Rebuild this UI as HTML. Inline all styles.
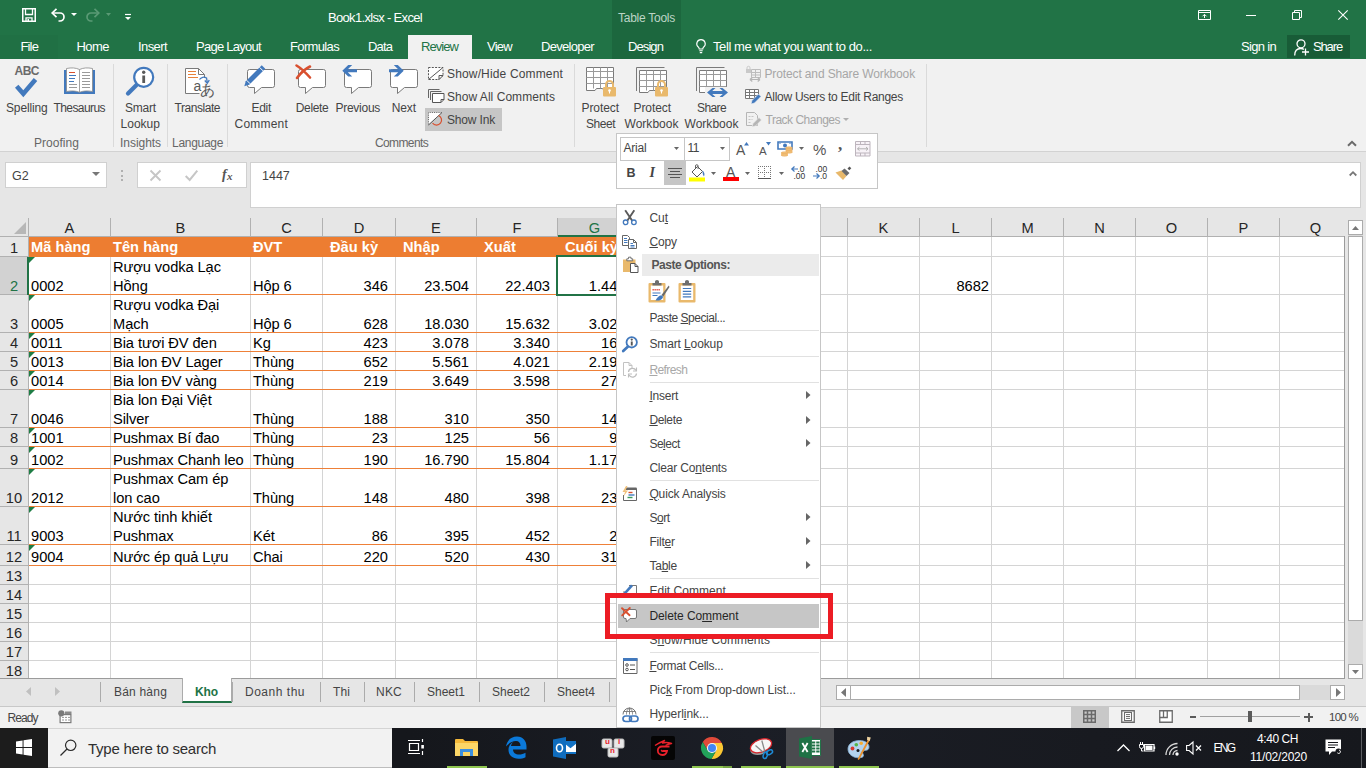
<!DOCTYPE html>
<html lang="en"><head><meta charset="utf-8"><title>Book1.xlsx - Excel</title>
<style>
html,body{margin:0;padding:0;width:1366px;height:768px;overflow:hidden;background:#fff;}
body{position:relative;font-family:"Liberation Sans",sans-serif;font-size:12px;color:#262626;}
.t{position:absolute;white-space:nowrap;line-height:1;display:block;}
.b{position:absolute;box-sizing:border-box;}
svg{position:absolute;overflow:visible;}
u{text-decoration:underline;text-underline-offset:1px;}
</style></head><body>
<div class="b" style="left:0px;top:0px;width:1366px;height:59px;background:#217346;"></div>
<div class="b" style="left:0px;top:35px;width:58px;height:24px;background:#207044;"></div>
<div class="b" style="left:612px;top:0px;width:69px;height:59px;background:#1c673e;"></div>
<span class="t" style="left:328px;top:11px;font-size:13px;color:#fff;letter-spacing:-0.678px;">Book1.xlsx - Excel</span>
<span class="t" style="left:618px;top:11.5px;font-size:12px;color:#bcd5c6;letter-spacing:-0.256px;">Table Tools</span>
<svg style="left:22px;top:8px" width="14" height="14" viewBox="0 0 14 14"><path d="M0.750 0.750h12.500v12.500h-12.500z" fill="none" stroke="#fff" stroke-width="1.500"/><path d="M3.500 1V6.500H10.500V1M4 13V9.800H10V13" fill="none" stroke="#fff" stroke-width="1.300"/><rect x="5.500" y="11" width="1.500" height="2" fill="#fff"/></svg>
<svg style="left:51px;top:8px" width="15" height="14" viewBox="0 0 15 14"><path d="M5.500 0.800L1.200 5l4.300 4.200" fill="none" stroke="#fff" stroke-width="1.700"/><path d="M1.500 5h7.500a4 4 0 0 1 0 8H7.500" fill="none" stroke="#fff" stroke-width="1.700"/></svg>
<svg style="left:71px;top:13px" width="6" height="3" viewBox="0 0 6 3"><path d="M0 0h6L3 3z" fill="#fff"/></svg>
<svg style="left:85px;top:8px" width="15" height="14" viewBox="0 0 15 14"><path d="M9.500 0.800L13.800 5l-4.300 4.200" fill="none" stroke="#5a9a75" stroke-width="1.700"/><path d="M13.500 5H6a4 4 0 0 0 0 8h1.500" fill="none" stroke="#5a9a75" stroke-width="1.700"/></svg>
<svg style="left:106px;top:13px" width="5" height="3" viewBox="0 0 5 3"><path d="M0 0h5L2.500 3z" fill="#5a9a75"/></svg>
<svg style="left:124.5px;top:14px" width="6" height="6" viewBox="0 0 6 6"><path d="M0 0.500h6" stroke="#fff" stroke-width="1.200"/><path d="M0 3h6L3 6z" fill="#fff"/></svg>
<svg style="left:1198px;top:10px" width="13" height="10" viewBox="0 0 13 10"><path d="M0.500 0.500h12v9h-12zM0.500 2.500h12" fill="none" stroke="#fff"/><path d="M6.500 8V4.500M4.500 6.300L6.500 4.300 8.500 6.300" fill="none" stroke="#fff"/></svg>
<div class="b" style="left:1246px;top:15px;width:10px;height:1px;background:#fff;"></div>
<svg style="left:1292px;top:10px" width="10" height="10" viewBox="0 0 10 10"><path d="M0.500 2.500h7v7h-7z" fill="none" stroke="#fff"/><path d="M2.500 2.500v-2h7v7h-2" fill="none" stroke="#fff"/></svg>
<svg style="left:1338px;top:10px" width="10" height="10" viewBox="0 0 10 10"><path d="M0.300 0.300l9.400 9.400M9.700 0.300L0.300 9.700" stroke="#fff" stroke-width="1.100"/></svg>
<span class="t" style="left:20.5px;top:40px;font-size:13px;color:#fff;letter-spacing:-0.862px;">File</span>
<span class="t" style="left:76.5px;top:40px;font-size:13px;color:#fff;letter-spacing:-0.544px;">Home</span>
<span class="t" style="left:138px;top:40px;font-size:13px;color:#fff;letter-spacing:-0.585px;">Insert</span>
<span class="t" style="left:196px;top:40px;font-size:13px;color:#fff;letter-spacing:-0.727px;">Page Layout</span>
<span class="t" style="left:290px;top:40px;font-size:13px;color:#fff;letter-spacing:-0.647px;">Formulas</span>
<span class="t" style="left:368px;top:40px;font-size:13px;color:#fff;letter-spacing:-0.865px;">Data</span>
<span class="t" style="left:487px;top:40px;font-size:13px;color:#fff;letter-spacing:-0.735px;">View</span>
<span class="t" style="left:541px;top:40px;font-size:13px;color:#fff;letter-spacing:-0.695px;">Developer</span>
<span class="t" style="left:628px;top:40px;font-size:13px;color:#fff;letter-spacing:-0.911px;">Design</span>
<div class="b" style="left:408px;top:35px;width:64px;height:25px;background:#f1f1f1;"></div>
<span class="t" style="left:421px;top:40px;font-size:13px;color:#217346;letter-spacing:-0.937px;">Review</span>
<svg style="left:696px;top:39px" width="10" height="15" viewBox="0 0 10 15"><path d="M5 0.600a4.200 4.200 0 0 1 2.500 7.600c-.5.400-.7 1-.7 1.800H3.200c0-.8-.2-1.400-.7-1.800A4.200 4.200 0 0 1 5 .6z" fill="none" stroke="#fff" stroke-width="1.100"/><path d="M3.300 11.800h3.400M3.800 13.600h2.400" stroke="#fff" stroke-width="1.100"/></svg>
<span class="t" style="left:713px;top:40px;font-size:13px;color:#fff;letter-spacing:-0.408px;">Tell me what you want to do...</span>
<span class="t" style="left:1241px;top:40px;font-size:13px;color:#fff;letter-spacing:-0.678px;">Sign in</span>
<div class="b" style="left:1287px;top:35px;width:63px;height:23px;background:#185c37;"></div>
<svg style="left:1294px;top:39px" width="16" height="17" viewBox="0 0 16 17"><circle cx="7" cy="4.800" r="4" fill="none" stroke="#fff" stroke-width="1.300"/><path d="M0.700 16.500c0-4.500 2.500-7 6-7 1.300 0 2.300.3 3.200.9" fill="none" stroke="#fff" stroke-width="1.300"/><path d="M11.500 9.500v7M8 13h7" stroke="#fff" stroke-width="1.300"/></svg>
<span class="t" style="left:1313px;top:40px;font-size:13px;color:#fff;letter-spacing:-1.138px;">Share</span>
<div class="b" style="left:0px;top:59px;width:1366px;height:92px;background:#f1f1f1;"></div>
<div class="b" style="left:0px;top:151px;width:1366px;height:1px;background:#d2d2d2;"></div>
<div class="b" style="left:0px;top:152px;width:1366px;height:66px;background:#e6e6e6;"></div>
<div class="b" style="left:113px;top:64px;width:1px;height:83px;background:#dadada;"></div>
<div class="b" style="left:167px;top:64px;width:1px;height:83px;background:#dadada;"></div>
<div class="b" style="left:227px;top:64px;width:1px;height:83px;background:#dadada;"></div>
<div class="b" style="left:574px;top:64px;width:1px;height:83px;background:#dadada;"></div>
<div class="b" style="left:926px;top:64px;width:1px;height:83px;background:#dadada;"></div>
<span class="t" style="left:14.5px;top:64.5px;font-size:12px;color:#6a6a6a;letter-spacing:-0.500px;font-weight:bold;">ABC</span>
<svg style="left:14px;top:77px" width="24" height="20" viewBox="0 0 24 20"><path d="M2.700 9.300L9.300 16.800 21.500 2.500" fill="none" stroke="#4279bd" stroke-width="4.600"/></svg>
<svg style="left:64px;top:67px" width="31" height="27" viewBox="0 0 31 27"><path d="M0 3h31v24H0z" fill="#4279bd"/><path d="M2.500 1.500c5-1 9-.8 13 1 4-1.800 8-2 13-1v23c-5-1-9-.8-13 .8-4-1.600-8-1.800-13-.8z" fill="#fff" stroke="#8a8a8a" stroke-width=".8"/><path d="M15.500 2.500v22.500" stroke="#8a8a8a" stroke-width=".8"/><path d="M5 5.500h6" stroke="#d9502f"/><path d="M5 8.500h7M5 11.500h6M5 14.500h5" stroke="#4279bd"/><path d="M5 17.500h8M5 20.500h8M18 5.500h8M18 8.500h8M18 11.500h8M18 14.500h8M18 17.500h8M18 20.500h8" stroke="#9a9a9a"/></svg>
<svg style="left:125px;top:66px" width="30" height="30" viewBox="0 0 30 30"><path d="M12 18.500L3 27.500" stroke="#4279bd" stroke-width="4.200" stroke-linecap="round"/><circle cx="18.700" cy="11.300" r="9.500" fill="#fff" stroke="#4279bd" stroke-width="2.200"/><rect x="17.300" y="9.500" width="2.800" height="7.500" fill="#5a5a5a"/><circle cx="18.700" cy="6.300" r="1.700" fill="#5a5a5a"/></svg>
<svg style="left:185px;top:68px" width="30" height="30" viewBox="0 0 30 30"><path d="M0.500 0.500h13l6 6v19h-19z" fill="#fff"/><path d="M19.500 10V6.500l-6-6h-13v25h14" fill="none" stroke="#7a7a7a"/><path d="M13.500 0.500v6h6" fill="none" stroke="#7a7a7a"/><path d="M3 3.500h8M3 6.500h8M3 9.500h10" stroke="#e8813a" stroke-width="1.100"/><rect x="7" y="13" width="21" height="16" fill="#f1f1f1" opacity="0"/><path d="M14.500 11.500a5 5 0 0 1 7-1.500l.7 4" fill="none" stroke="#4279bd" stroke-width="1.300"/><path d="M19.800 12.500l2.500 2.600 2-3" fill="none" stroke="#4279bd" stroke-width="1.300"/></svg>
<span class="t" style="left:193.5px;top:78.5px;font-size:14px;color:#5a5a5a;">a</span>
<span class="t" style="left:200px;top:83px;font-size:14.5px;color:#5a5a5a;font-family:"Liberation Sans","Noto Sans CJK JP",sans-serif;">あ</span>
<svg style="left:247px;top:69px" width="29" height="26" viewBox="0 0 29 26"><path d="M2.500 0.500h23a2 2 0 0 1 2 2v14a2 2 0 0 1-2 2H14.500L7.500 24.500V18.500H2.500a2 2 0 0 1-2-2v-14a2 2 0 0 1 2-2z" fill="#fff" stroke="#7a7a7a"/></svg>
<svg style="left:244px;top:65px" width="23" height="22" viewBox="0 0 23 22"><path d="M0.300 21.200L1.730 16.230L17.730 0.230L21.270 3.770L5.270 19.770Z" fill="#4279bd"/><path d="M15.600 2.400l3.500 3.500M2.700 15.300l3.500 3.500" stroke="#fff" stroke-width="1"/></svg>
<svg style="left:298px;top:69px" width="29" height="26" viewBox="0 0 29 26"><path d="M2.500 0.500h23a2 2 0 0 1 2 2v14a2 2 0 0 1-2 2H14.500L7.500 24.500V18.500H2.500a2 2 0 0 1-2-2v-14a2 2 0 0 1 2-2z" fill="#fff" stroke="#7a7a7a"/></svg>
<svg style="left:295px;top:64px" width="17" height="16" viewBox="0 0 17 16"><path d="M1.500 1.500c5 3 9 7 13.500 12M15 2.500C10 5 5.500 9 2 14" fill="none" stroke="#d9502f" stroke-width="2.600" stroke-linecap="round"/></svg>
<svg style="left:344px;top:69px" width="29" height="26" viewBox="0 0 29 26"><path d="M2.500 0.500h23a2 2 0 0 1 2 2v14a2 2 0 0 1-2 2H14.500L7.500 24.500V18.500H2.500a2 2 0 0 1-2-2v-14a2 2 0 0 1 2-2z" fill="#fff" stroke="#7a7a7a"/></svg>
<svg style="left:342px;top:65px" width="16" height="12" viewBox="0 0 16 12"><path d="M0.300 5.700L6.200 0h4L5.800 4.200H15v3H5.800l4.400 4.200h-4z" fill="#4279bd"/></svg>
<svg style="left:390px;top:69px" width="29" height="26" viewBox="0 0 29 26"><path d="M2.500 0.500h23a2 2 0 0 1 2 2v14a2 2 0 0 1-2 2H14.500L7.500 24.500V18.500H2.500a2 2 0 0 1-2-2v-14a2 2 0 0 1 2-2z" fill="#fff" stroke="#7a7a7a"/></svg>
<svg style="left:388px;top:65px" width="16" height="12" viewBox="0 0 16 12"><path d="M15.700 5.700L9.800 0h-4l4.400 4.200H1v3h9.200L5.800 11.400h4z" fill="#4279bd"/></svg>
<svg style="left:428px;top:67px" width="16" height="13" viewBox="0 0 16 13"><path d="M0.500 0.500h14.500v8l-4 4H0.500z" fill="#fff" stroke="#555" stroke-dasharray="2 1.300"/><path d="M15 8.500h-4v4z" fill="#fff" stroke="#555"/><path d="M0.500 12.500L15 0.500" stroke="#555"/></svg>
<svg style="left:428px;top:89px" width="17" height="15" viewBox="0 0 17 15"><path d="M0.500 9V0.500h11M2.500 11V2.500h11" fill="none" stroke="#666"/><path d="M4.500 4.500h11.500v6l-3 3h-8.500z" fill="#fff" stroke="#555"/><path d="M16 10.500h-3v3" fill="none" stroke="#555"/></svg>
<div class="b" style="left:425px;top:108px;width:77px;height:23px;background:#c6c6c6;"></div>
<svg style="left:428px;top:112px" width="17" height="14" viewBox="0 0 17 14"><path d="M0.500 12.500L14 0.500H0.500z" fill="#fff"/><path d="M0.500 12.500V0.500H14" fill="none" stroke="#666" stroke-dasharray="1 1.200"/><path d="M0.500 13L14 0.500" stroke="#555"/><path d="M10.500 3.500a5 5 0 1 1-6 7.500" fill="none" stroke="#d9502f" stroke-width="1.200"/></svg>
<svg style="left:586px;top:67px" width="31" height="31" viewBox="0 0 31 31"><path d="M0.500 0.500h27v23h-9.500l-1.500-2h-6l-1.500 2H0.500z" fill="#fff" stroke="#7a7a7a"/><path d="M0.500 4.500h27M0.500 10.500h27M0.500 16.500h27M7.500 0.500v21M14.500 0.500v21M21.500 0.500v21" fill="none" stroke="#9a9a9a"/><rect x="17" y="20" width="13" height="9.500" rx="1" fill="#e9b96c"/><path d="M20 20v-2.500a3.500 3.500 0 0 1 7 0v2.500" fill="none" stroke="#e9b96c" stroke-width="2"/><circle cx="23.5" cy="23.5" r="1.300" fill="#fff"/><rect x="23" y="23.5" width="1" height="3" fill="#fff"/></svg>
<svg style="left:636px;top:67px" width="33" height="31" viewBox="0 0 33 31"><path d="M0.500 24V0.500h28" fill="none" stroke="#7a7a7a"/><g transform="translate(3,3)"><path d="M0.500 0.500h27v22h-9.500l-1.500-2h-6l-1.500 2H0.500z" fill="#fff" stroke="#7a7a7a"/><path d="M0.500 4.500h27M0.500 10.500h27M0.500 16.500h27M7.500 0.500v20M14.500 0.500v20M21.500 0.500v20" fill="none" stroke="#9a9a9a"/></g><rect x="19" y="20" width="13" height="9.500" rx="1" fill="#e9b96c"/><path d="M22 20v-2.500a3.500 3.500 0 0 1 7 0v2.500" fill="none" stroke="#e9b96c" stroke-width="2"/><circle cx="25.5" cy="23.5" r="1.300" fill="#fff"/><rect x="25" y="23.5" width="1" height="3" fill="#fff"/></svg>
<svg style="left:696px;top:67px" width="33" height="31" viewBox="0 0 33 31"><path d="M0.500 24V0.500h28" fill="none" stroke="#7a7a7a"/><g transform="translate(3,3)"><path d="M0.500 0.500h27v22h-27z" fill="#fff" stroke="#7a7a7a"/><path d="M0.500 4.500h27M0.500 10.500h27M0.500 16.500h27M7.500 0.500v22M14.500 0.500v22M21.500 0.500v22" fill="none" stroke="#9a9a9a"/></g><path d="M9 20h24v11H9z" fill="#f1f1f1"/><path d="M11 25.500l5.500-4.500h3l-3.300 3h10.600l-3.300-3h3l5.500 4.500-5.500 4.500h-3l3.300-3H16.200l3.300 3h-3z" fill="#4279bd"/></svg>
<svg style="left:745px;top:66px" width="17" height="16" viewBox="0 0 17 16"><rect x="1" y="3" width="5" height="4" fill="#c9c9c9"/><path d="M2 3V1.800a1.500 1.500 0 0 1 3 0V3" fill="none" stroke="#c9c9c9"/><path d="M6.500 3.500h9v8h-9zM6.500 6.500h9M6.500 9h9M10.500 3.500v8" fill="none" stroke="#bdbdbd"/><path d="M5 13.500h10M5 13.500l2.300-2M5 13.500l2.300 2M15 13.500l-2.300-2M15 13.500l-2.300 2" fill="none" stroke="#b5b5b5" stroke-width="1.200"/></svg>
<svg style="left:745px;top:89px" width="17" height="16" viewBox="0 0 17 16"><path d="M0.500 0.500h13v9h-13zM0.500 3.500h13M0.500 6.500h13M4.500 0.500v9M9.500 0.500v9" fill="#fff" stroke="#777"/><path d="M6 15l1-3.500 6.500-6.500 2.500 2.500-6.500 6.500z" fill="#4279bd" stroke="#f1f1f1" stroke-width=".6"/></svg>
<svg style="left:746px;top:112px" width="16" height="16" viewBox="0 0 16 16"><path d="M0.500 0.500h8l3 3v10h-11z" fill="none" stroke="#b5b5b5"/><path d="M2.500 4.500h5M2.500 7.500h4M2.500 10.500h3" stroke="#c5c5c5" stroke-dasharray="2 1"/><path d="M6 15l1-3.500 6-6 2.500 2.500-6 6z" fill="#b5b5b5" stroke="#f1f1f1" stroke-width=".6"/></svg>
<span class="t" style="left:6px;top:102px;font-size:12px;color:#444;letter-spacing:-0.149px;">Spelling</span>
<span class="t" style="left:53.5px;top:102px;font-size:12px;color:#444;letter-spacing:-0.577px;">Thesaurus</span>
<span class="t" style="left:125px;top:102px;font-size:12px;color:#444;letter-spacing:-0.200px;">Smart</span>
<span class="t" style="left:120.5px;top:118px;font-size:12px;color:#444;letter-spacing:0.022px;">Lookup</span>
<span class="t" style="left:174.5px;top:102px;font-size:12px;color:#444;letter-spacing:-0.453px;">Translate</span>
<span class="t" style="left:251.5px;top:102px;font-size:12px;color:#444;letter-spacing:-0.294px;">Edit</span>
<span class="t" style="left:234.5px;top:118px;font-size:12px;color:#444;letter-spacing:0.213px;">Comment</span>
<span class="t" style="left:295.8px;top:102px;font-size:12px;color:#444;letter-spacing:-0.364px;">Delete</span>
<span class="t" style="left:335.5px;top:102px;font-size:12px;color:#444;letter-spacing:-0.273px;">Previous</span>
<span class="t" style="left:391.8px;top:102px;font-size:12px;color:#444;letter-spacing:-0.168px;">Next</span>
<span class="t" style="left:447px;top:68px;font-size:12px;color:#444;letter-spacing:0.154px;">Show/Hide Comment</span>
<span class="t" style="left:447px;top:91px;font-size:12px;color:#444;letter-spacing:0.037px;">Show All Comments</span>
<span class="t" style="left:447px;top:114px;font-size:12px;color:#444;letter-spacing:-0.170px;">Show Ink</span>
<span class="t" style="left:581.5px;top:102px;font-size:12px;color:#444;letter-spacing:-0.073px;">Protect</span>
<span class="t" style="left:586px;top:118px;font-size:12px;color:#444;letter-spacing:-0.472px;">Sheet</span>
<span class="t" style="left:633.5px;top:102px;font-size:12px;color:#444;letter-spacing:-0.073px;">Protect</span>
<span class="t" style="left:624.5px;top:118px;font-size:12px;color:#444;letter-spacing:0.025px;">Workbook</span>
<span class="t" style="left:697px;top:102px;font-size:12px;color:#444;letter-spacing:-0.604px;">Share</span>
<span class="t" style="left:684.5px;top:118px;font-size:12px;color:#444;letter-spacing:0.025px;">Workbook</span>
<span class="t" style="left:764.5px;top:68px;font-size:12px;color:#a6a6a6;letter-spacing:-0.129px;">Protect and Share Workbook</span>
<span class="t" style="left:764.5px;top:91px;font-size:12px;color:#444;letter-spacing:-0.265px;">Allow Users to Edit Ranges</span>
<span class="t" style="left:765.5px;top:114px;font-size:12px;color:#a6a6a6;letter-spacing:-0.494px;">Track Changes</span>
<svg style="left:843px;top:118px" width="6" height="3" viewBox="0 0 6 3"><path d="M0 0h6L3 3z" fill="#b0b0b0"/></svg>
<span class="t" style="left:34px;top:137px;font-size:12px;color:#666;letter-spacing:0.038px;">Proofing</span>
<span class="t" style="left:120px;top:137px;font-size:12px;color:#666;letter-spacing:-0.044px;">Insights</span>
<span class="t" style="left:172px;top:137px;font-size:12px;color:#666;letter-spacing:-0.298px;">Language</span>
<span class="t" style="left:375px;top:137px;font-size:12px;color:#666;letter-spacing:-0.626px;">Comments</span>
<svg style="left:1346.5px;top:139.5px" width="10" height="7" viewBox="0 0 10 7"><path d="M1 5.800L5 1.800l4 4" fill="none" stroke="#6a6a6a" stroke-width="2"/></svg>
<div class="b" style="left:5px;top:162px;width:102px;height:26px;background:#fff;border:1px solid #d0d0d0;"></div>
<span class="t" style="left:12px;top:170px;font-size:12.5px;color:#444;">G2</span>
<svg style="left:92px;top:172px" width="8" height="4" viewBox="0 0 8 4"><path d="M0 0h8L4 4z" fill="#777"/></svg>
<div class="b" style="left:121px;top:170px;width:2px;height:2px;background:#b0b0b0;"></div>
<div class="b" style="left:121px;top:174.5px;width:2px;height:2px;background:#b0b0b0;"></div>
<div class="b" style="left:121px;top:179px;width:2px;height:2px;background:#b0b0b0;"></div>
<div class="b" style="left:137px;top:162px;width:110px;height:26px;background:#fff;border:1px solid #d0d0d0;"></div>
<svg style="left:150px;top:170px" width="11" height="11" viewBox="0 0 11 11"><path d="M0.500 0.500l10 10M10.500 0.500l-10 10" stroke="#c6c6c6" stroke-width="1.900"/></svg>
<svg style="left:185px;top:170px" width="13" height="11" viewBox="0 0 13 11"><path d="M0.700 6l4 4L12.300 0.700" fill="none" stroke="#c6c6c6" stroke-width="2"/></svg>
<span class="t" style="left:222px;top:167px;font-size:14px;color:#555;"><i style="font-family:'Liberation Serif',serif;font-weight:bold;">f</i></span>
<span class="t" style="left:227px;top:171px;font-size:11px;color:#555;"><i style="font-family:'Liberation Serif',serif;font-weight:bold;">x</i></span>
<div class="b" style="left:250px;top:162px;width:1111px;height:46px;background:#fff;border:1px solid #d0d0d0;"></div>
<span class="t" style="left:262px;top:170px;font-size:12.5px;color:#444;">1447</span>
<svg style="left:1348.5px;top:171px" width="8" height="5" viewBox="0 0 8 5"><path d="M0.700 4.500L4 1.200l3.300 3.300" fill="none" stroke="#777" stroke-width="1.800"/></svg>
<div class="b" style="left:0;top:218px;width:1345px;height:461px;overflow:hidden;background:#fff;">
<div class="b" style="left:0px;top:0px;width:1345px;height:19px;background:#e6e6e6;"></div>
<div class="b" style="left:0px;top:19px;width:29px;height:442px;background:#e6e6e6;"></div>
<div class="b" style="left:558px;top:0px;width:73px;height:19px;background:#d2d2d2;"></div>
<div class="b" style="left:0px;top:39px;width:29px;height:37px;background:#d2d2d2;"></div>
<div class="b" style="left:110px;top:19px;width:1px;height:442px;background:#d4d4d4;"></div>
<div class="b" style="left:110px;top:0px;width:1px;height:18px;background:#b1b1b1;"></div>
<span class="t" style="left:63.5px;top:3px;font-size:14.67px;color:#262626;width:12px;text-align:center;">A</span>
<div class="b" style="left:250px;top:19px;width:1px;height:442px;background:#d4d4d4;"></div>
<div class="b" style="left:250px;top:0px;width:1px;height:18px;background:#b1b1b1;"></div>
<span class="t" style="left:174.5px;top:3px;font-size:14.67px;color:#262626;width:12px;text-align:center;">B</span>
<div class="b" style="left:322px;top:19px;width:1px;height:442px;background:#d4d4d4;"></div>
<div class="b" style="left:322px;top:0px;width:1px;height:18px;background:#b1b1b1;"></div>
<span class="t" style="left:280.5px;top:3px;font-size:14.67px;color:#262626;width:12px;text-align:center;">C</span>
<div class="b" style="left:395px;top:19px;width:1px;height:442px;background:#d4d4d4;"></div>
<div class="b" style="left:395px;top:0px;width:1px;height:18px;background:#b1b1b1;"></div>
<span class="t" style="left:353px;top:3px;font-size:14.67px;color:#262626;width:12px;text-align:center;">D</span>
<div class="b" style="left:476px;top:19px;width:1px;height:442px;background:#d4d4d4;"></div>
<div class="b" style="left:476px;top:0px;width:1px;height:18px;background:#b1b1b1;"></div>
<span class="t" style="left:430px;top:3px;font-size:14.67px;color:#262626;width:12px;text-align:center;">E</span>
<div class="b" style="left:557px;top:19px;width:1px;height:442px;background:#d4d4d4;"></div>
<div class="b" style="left:557px;top:0px;width:1px;height:18px;background:#b1b1b1;"></div>
<span class="t" style="left:511px;top:3px;font-size:14.67px;color:#262626;width:12px;text-align:center;">F</span>
<div class="b" style="left:631px;top:19px;width:1px;height:442px;background:#d4d4d4;"></div>
<div class="b" style="left:631px;top:0px;width:1px;height:18px;background:#b1b1b1;"></div>
<span class="t" style="left:588.5px;top:3px;font-size:14.67px;color:#217346;width:12px;text-align:center;">G</span>
<div class="b" style="left:703px;top:19px;width:1px;height:442px;background:#d4d4d4;"></div>
<div class="b" style="left:703px;top:0px;width:1px;height:18px;background:#b1b1b1;"></div>
<span class="t" style="left:661.5px;top:3px;font-size:14.67px;color:#262626;width:12px;text-align:center;">H</span>
<div class="b" style="left:775px;top:19px;width:1px;height:442px;background:#d4d4d4;"></div>
<div class="b" style="left:775px;top:0px;width:1px;height:18px;background:#b1b1b1;"></div>
<span class="t" style="left:733.5px;top:3px;font-size:14.67px;color:#262626;width:12px;text-align:center;">I</span>
<div class="b" style="left:847px;top:19px;width:1px;height:442px;background:#d4d4d4;"></div>
<div class="b" style="left:847px;top:0px;width:1px;height:18px;background:#b1b1b1;"></div>
<span class="t" style="left:805.5px;top:3px;font-size:14.67px;color:#262626;width:12px;text-align:center;">J</span>
<div class="b" style="left:919px;top:19px;width:1px;height:442px;background:#d4d4d4;"></div>
<div class="b" style="left:919px;top:0px;width:1px;height:18px;background:#b1b1b1;"></div>
<span class="t" style="left:877.5px;top:3px;font-size:14.67px;color:#262626;width:12px;text-align:center;">K</span>
<div class="b" style="left:991px;top:19px;width:1px;height:442px;background:#d4d4d4;"></div>
<div class="b" style="left:991px;top:0px;width:1px;height:18px;background:#b1b1b1;"></div>
<span class="t" style="left:949.5px;top:3px;font-size:14.67px;color:#262626;width:12px;text-align:center;">L</span>
<div class="b" style="left:1063px;top:19px;width:1px;height:442px;background:#d4d4d4;"></div>
<div class="b" style="left:1063px;top:0px;width:1px;height:18px;background:#b1b1b1;"></div>
<span class="t" style="left:1021.5px;top:3px;font-size:14.67px;color:#262626;width:12px;text-align:center;">M</span>
<div class="b" style="left:1135px;top:19px;width:1px;height:442px;background:#d4d4d4;"></div>
<div class="b" style="left:1135px;top:0px;width:1px;height:18px;background:#b1b1b1;"></div>
<span class="t" style="left:1093.5px;top:3px;font-size:14.67px;color:#262626;width:12px;text-align:center;">N</span>
<div class="b" style="left:1207px;top:19px;width:1px;height:442px;background:#d4d4d4;"></div>
<div class="b" style="left:1207px;top:0px;width:1px;height:18px;background:#b1b1b1;"></div>
<span class="t" style="left:1165.5px;top:3px;font-size:14.67px;color:#262626;width:12px;text-align:center;">O</span>
<div class="b" style="left:1279px;top:19px;width:1px;height:442px;background:#d4d4d4;"></div>
<div class="b" style="left:1279px;top:0px;width:1px;height:18px;background:#b1b1b1;"></div>
<span class="t" style="left:1237.5px;top:3px;font-size:14.67px;color:#262626;width:12px;text-align:center;">P</span>
<div class="b" style="left:1351px;top:19px;width:1px;height:442px;background:#d4d4d4;"></div>
<div class="b" style="left:1351px;top:0px;width:1px;height:18px;background:#b1b1b1;"></div>
<span class="t" style="left:1309.5px;top:3px;font-size:14.67px;color:#262626;width:12px;text-align:center;">Q</span>
<div class="b" style="left:28px;top:0px;width:1px;height:461px;background:#b1b1b1;"></div>
<div class="b" style="left:0px;top:18px;width:1345px;height:1px;background:#b1b1b1;"></div>
<div class="b" style="left:0px;top:38px;width:28px;height:1px;background:#b1b1b1;"></div>
<div class="b" style="left:29px;top:38px;width:1316px;height:1px;background:#d4d4d4;"></div>
<span class="t" style="left:0px;top:22.5px;font-size:14.67px;color:#262626;width:28px;text-align:center;">1</span>
<div class="b" style="left:0px;top:76px;width:28px;height:1px;background:#b1b1b1;"></div>
<div class="b" style="left:29px;top:76px;width:1316px;height:1px;background:#d4d4d4;"></div>
<span class="t" style="left:0px;top:60.5px;font-size:14.67px;color:#217346;width:28px;text-align:center;">2</span>
<div class="b" style="left:0px;top:114px;width:28px;height:1px;background:#b1b1b1;"></div>
<div class="b" style="left:29px;top:114px;width:1316px;height:1px;background:#d4d4d4;"></div>
<span class="t" style="left:0px;top:98.5px;font-size:14.67px;color:#262626;width:28px;text-align:center;">3</span>
<div class="b" style="left:0px;top:133px;width:28px;height:1px;background:#b1b1b1;"></div>
<div class="b" style="left:29px;top:133px;width:1316px;height:1px;background:#d4d4d4;"></div>
<span class="t" style="left:0px;top:117.5px;font-size:14.67px;color:#262626;width:28px;text-align:center;">4</span>
<div class="b" style="left:0px;top:152px;width:28px;height:1px;background:#b1b1b1;"></div>
<div class="b" style="left:29px;top:152px;width:1316px;height:1px;background:#d4d4d4;"></div>
<span class="t" style="left:0px;top:136.5px;font-size:14.67px;color:#262626;width:28px;text-align:center;">5</span>
<div class="b" style="left:0px;top:171px;width:28px;height:1px;background:#b1b1b1;"></div>
<div class="b" style="left:29px;top:171px;width:1316px;height:1px;background:#d4d4d4;"></div>
<span class="t" style="left:0px;top:155.5px;font-size:14.67px;color:#262626;width:28px;text-align:center;">6</span>
<div class="b" style="left:0px;top:209px;width:28px;height:1px;background:#b1b1b1;"></div>
<div class="b" style="left:29px;top:209px;width:1316px;height:1px;background:#d4d4d4;"></div>
<span class="t" style="left:0px;top:193.5px;font-size:14.67px;color:#262626;width:28px;text-align:center;">7</span>
<div class="b" style="left:0px;top:228px;width:28px;height:1px;background:#b1b1b1;"></div>
<div class="b" style="left:29px;top:228px;width:1316px;height:1px;background:#d4d4d4;"></div>
<span class="t" style="left:0px;top:212.5px;font-size:14.67px;color:#262626;width:28px;text-align:center;">8</span>
<div class="b" style="left:0px;top:250px;width:28px;height:1px;background:#b1b1b1;"></div>
<div class="b" style="left:29px;top:250px;width:1316px;height:1px;background:#d4d4d4;"></div>
<span class="t" style="left:0px;top:234.5px;font-size:14.67px;color:#262626;width:28px;text-align:center;">9</span>
<div class="b" style="left:0px;top:288px;width:28px;height:1px;background:#b1b1b1;"></div>
<div class="b" style="left:29px;top:288px;width:1316px;height:1px;background:#d4d4d4;"></div>
<span class="t" style="left:0px;top:272.5px;font-size:14.67px;color:#262626;width:28px;text-align:center;">10</span>
<div class="b" style="left:0px;top:326px;width:28px;height:1px;background:#b1b1b1;"></div>
<div class="b" style="left:29px;top:326px;width:1316px;height:1px;background:#d4d4d4;"></div>
<span class="t" style="left:0px;top:310.5px;font-size:14.67px;color:#262626;width:28px;text-align:center;">11</span>
<div class="b" style="left:0px;top:347px;width:28px;height:1px;background:#b1b1b1;"></div>
<div class="b" style="left:29px;top:347px;width:1316px;height:1px;background:#d4d4d4;"></div>
<span class="t" style="left:0px;top:331.5px;font-size:14.67px;color:#262626;width:28px;text-align:center;">12</span>
<div class="b" style="left:0px;top:366px;width:28px;height:1px;background:#b1b1b1;"></div>
<div class="b" style="left:29px;top:366px;width:1316px;height:1px;background:#d4d4d4;"></div>
<span class="t" style="left:0px;top:350.5px;font-size:14.67px;color:#262626;width:28px;text-align:center;">13</span>
<div class="b" style="left:0px;top:385px;width:28px;height:1px;background:#b1b1b1;"></div>
<div class="b" style="left:29px;top:385px;width:1316px;height:1px;background:#d4d4d4;"></div>
<span class="t" style="left:0px;top:369.5px;font-size:14.67px;color:#262626;width:28px;text-align:center;">14</span>
<div class="b" style="left:0px;top:404px;width:28px;height:1px;background:#b1b1b1;"></div>
<div class="b" style="left:29px;top:404px;width:1316px;height:1px;background:#d4d4d4;"></div>
<span class="t" style="left:0px;top:388.5px;font-size:14.67px;color:#262626;width:28px;text-align:center;">15</span>
<div class="b" style="left:0px;top:423px;width:28px;height:1px;background:#b1b1b1;"></div>
<div class="b" style="left:29px;top:423px;width:1316px;height:1px;background:#d4d4d4;"></div>
<span class="t" style="left:0px;top:407.5px;font-size:14.67px;color:#262626;width:28px;text-align:center;">16</span>
<div class="b" style="left:0px;top:442px;width:28px;height:1px;background:#b1b1b1;"></div>
<div class="b" style="left:29px;top:442px;width:1316px;height:1px;background:#d4d4d4;"></div>
<span class="t" style="left:0px;top:426.5px;font-size:14.67px;color:#262626;width:28px;text-align:center;">17</span>
<div class="b" style="left:0px;top:461px;width:28px;height:1px;background:#b1b1b1;"></div>
<div class="b" style="left:29px;top:461px;width:1316px;height:1px;background:#d4d4d4;"></div>
<span class="t" style="left:0px;top:445.5px;font-size:14.67px;color:#262626;width:28px;text-align:center;">18</span>
<svg style="left:14px;top:4px" width="12" height="12"><path d="M12 0V12H0Z" fill="#b7b7b7"/></svg>
<div class="b" style="left:29px;top:19px;width:602px;height:20px;background:#ed7d31;"></div>
<span class="t" style="left:31px;top:22px;font-size:14.67px;color:#fff;font-weight:bold;">Mã hàng</span>
<span class="t" style="left:113px;top:22px;font-size:14.67px;color:#fff;font-weight:bold;">Tên hàng</span>
<span class="t" style="left:253px;top:22px;font-size:14.67px;color:#fff;font-weight:bold;">ĐVT</span>
<span class="t" style="left:330px;top:22px;font-size:14.67px;color:#fff;font-weight:bold;">Đầu kỳ</span>
<span class="t" style="left:403px;top:22px;font-size:14.67px;color:#fff;font-weight:bold;">Nhập</span>
<span class="t" style="left:484px;top:22px;font-size:14.67px;color:#fff;font-weight:bold;">Xuất</span>
<span class="t" style="left:565px;top:22px;font-size:14.67px;color:#fff;font-weight:bold;">Cuối kỳ</span>
<div class="b" style="left:29px;top:76px;width:602px;height:1px;background:#ee8038;"></div>
<span class="t" style="left:31px;top:60.5px;font-size:14.67px;color:#000;">0002</span>
<span class="t" style="left:113px;top:60.5px;font-size:14.67px;color:#000;letter-spacing:-0.08px;">Hồng</span>
<span class="t" style="left:113px;top:41.5px;font-size:14.67px;color:#000;letter-spacing:-0.08px;">Rượu vodka Lạc</span>
<span class="t" style="left:253px;top:60.5px;font-size:14.67px;color:#000;letter-spacing:-0.1px;">Hộp 6</span>
<span class="t" style="left:288px;top:60.5px;font-size:14.67px;color:#000;width:100px;text-align:right;">346</span>
<span class="t" style="left:369px;top:60.5px;font-size:14.67px;color:#000;width:100px;text-align:right;">23.504</span>
<span class="t" style="left:450px;top:60.5px;font-size:14.67px;color:#000;width:100px;text-align:right;">22.403</span>
<span class="t" style="left:525.5px;top:60.5px;font-size:14.67px;color:#000;width:100px;text-align:right;">1.447</span>
<svg style="left:29px;top:39px" width="6" height="6"><path d="M0 0H6L0 6Z" fill="#1e7d45"/></svg>
<div class="b" style="left:29px;top:114px;width:602px;height:1px;background:#ee8038;"></div>
<span class="t" style="left:31px;top:98.5px;font-size:14.67px;color:#000;">0005</span>
<span class="t" style="left:113px;top:98.5px;font-size:14.67px;color:#000;letter-spacing:-0.08px;">Mạch</span>
<span class="t" style="left:113px;top:79.5px;font-size:14.67px;color:#000;letter-spacing:-0.08px;">Rượu vodka Đại</span>
<span class="t" style="left:253px;top:98.5px;font-size:14.67px;color:#000;letter-spacing:-0.1px;">Hộp 6</span>
<span class="t" style="left:288px;top:98.5px;font-size:14.67px;color:#000;width:100px;text-align:right;">628</span>
<span class="t" style="left:369px;top:98.5px;font-size:14.67px;color:#000;width:100px;text-align:right;">18.030</span>
<span class="t" style="left:450px;top:98.5px;font-size:14.67px;color:#000;width:100px;text-align:right;">15.632</span>
<span class="t" style="left:525.5px;top:98.5px;font-size:14.67px;color:#000;width:100px;text-align:right;">3.026</span>
<svg style="left:29px;top:77px" width="6" height="6"><path d="M0 0H6L0 6Z" fill="#1e7d45"/></svg>
<div class="b" style="left:29px;top:133px;width:602px;height:1px;background:#ee8038;"></div>
<span class="t" style="left:31px;top:117.5px;font-size:14.67px;color:#000;">0011</span>
<span class="t" style="left:113px;top:117.5px;font-size:14.67px;color:#000;letter-spacing:-0.08px;">Bia tươi ĐV đen</span>
<span class="t" style="left:253px;top:117.5px;font-size:14.67px;color:#000;letter-spacing:-0.1px;">Kg</span>
<span class="t" style="left:288px;top:117.5px;font-size:14.67px;color:#000;width:100px;text-align:right;">423</span>
<span class="t" style="left:369px;top:117.5px;font-size:14.67px;color:#000;width:100px;text-align:right;">3.078</span>
<span class="t" style="left:450px;top:117.5px;font-size:14.67px;color:#000;width:100px;text-align:right;">3.340</span>
<span class="t" style="left:525.5px;top:117.5px;font-size:14.67px;color:#000;width:100px;text-align:right;">161</span>
<svg style="left:29px;top:115px" width="6" height="6"><path d="M0 0H6L0 6Z" fill="#1e7d45"/></svg>
<div class="b" style="left:29px;top:152px;width:602px;height:1px;background:#ee8038;"></div>
<span class="t" style="left:31px;top:136.5px;font-size:14.67px;color:#000;">0013</span>
<span class="t" style="left:113px;top:136.5px;font-size:14.67px;color:#000;letter-spacing:-0.08px;">Bia lon ĐV Lager</span>
<span class="t" style="left:253px;top:136.5px;font-size:14.67px;color:#000;letter-spacing:-0.1px;">Thùng</span>
<span class="t" style="left:288px;top:136.5px;font-size:14.67px;color:#000;width:100px;text-align:right;">652</span>
<span class="t" style="left:369px;top:136.5px;font-size:14.67px;color:#000;width:100px;text-align:right;">5.561</span>
<span class="t" style="left:450px;top:136.5px;font-size:14.67px;color:#000;width:100px;text-align:right;">4.021</span>
<span class="t" style="left:525.5px;top:136.5px;font-size:14.67px;color:#000;width:100px;text-align:right;">2.192</span>
<svg style="left:29px;top:134px" width="6" height="6"><path d="M0 0H6L0 6Z" fill="#1e7d45"/></svg>
<div class="b" style="left:29px;top:171px;width:602px;height:1px;background:#ee8038;"></div>
<span class="t" style="left:31px;top:155.5px;font-size:14.67px;color:#000;">0014</span>
<span class="t" style="left:113px;top:155.5px;font-size:14.67px;color:#000;letter-spacing:-0.08px;">Bia lon ĐV vàng</span>
<span class="t" style="left:253px;top:155.5px;font-size:14.67px;color:#000;letter-spacing:-0.1px;">Thùng</span>
<span class="t" style="left:288px;top:155.5px;font-size:14.67px;color:#000;width:100px;text-align:right;">219</span>
<span class="t" style="left:369px;top:155.5px;font-size:14.67px;color:#000;width:100px;text-align:right;">3.649</span>
<span class="t" style="left:450px;top:155.5px;font-size:14.67px;color:#000;width:100px;text-align:right;">3.598</span>
<span class="t" style="left:525.5px;top:155.5px;font-size:14.67px;color:#000;width:100px;text-align:right;">270</span>
<svg style="left:29px;top:153px" width="6" height="6"><path d="M0 0H6L0 6Z" fill="#1e7d45"/></svg>
<div class="b" style="left:29px;top:209px;width:602px;height:1px;background:#ee8038;"></div>
<span class="t" style="left:31px;top:193.5px;font-size:14.67px;color:#000;">0046</span>
<span class="t" style="left:113px;top:193.5px;font-size:14.67px;color:#000;letter-spacing:-0.08px;">Silver</span>
<span class="t" style="left:113px;top:174.5px;font-size:14.67px;color:#000;letter-spacing:-0.08px;">Bia lon Đại Việt</span>
<span class="t" style="left:253px;top:193.5px;font-size:14.67px;color:#000;letter-spacing:-0.1px;">Thùng</span>
<span class="t" style="left:288px;top:193.5px;font-size:14.67px;color:#000;width:100px;text-align:right;">188</span>
<span class="t" style="left:369px;top:193.5px;font-size:14.67px;color:#000;width:100px;text-align:right;">310</span>
<span class="t" style="left:450px;top:193.5px;font-size:14.67px;color:#000;width:100px;text-align:right;">350</span>
<span class="t" style="left:525.5px;top:193.5px;font-size:14.67px;color:#000;width:100px;text-align:right;">148</span>
<svg style="left:29px;top:172px" width="6" height="6"><path d="M0 0H6L0 6Z" fill="#1e7d45"/></svg>
<div class="b" style="left:29px;top:228px;width:602px;height:1px;background:#ee8038;"></div>
<span class="t" style="left:31px;top:212.5px;font-size:14.67px;color:#000;">1001</span>
<span class="t" style="left:113px;top:212.5px;font-size:14.67px;color:#000;letter-spacing:-0.08px;">Pushmax Bí đao</span>
<span class="t" style="left:253px;top:212.5px;font-size:14.67px;color:#000;letter-spacing:-0.1px;">Thùng</span>
<span class="t" style="left:288px;top:212.5px;font-size:14.67px;color:#000;width:100px;text-align:right;">23</span>
<span class="t" style="left:369px;top:212.5px;font-size:14.67px;color:#000;width:100px;text-align:right;">125</span>
<span class="t" style="left:450px;top:212.5px;font-size:14.67px;color:#000;width:100px;text-align:right;">56</span>
<span class="t" style="left:525.5px;top:212.5px;font-size:14.67px;color:#000;width:100px;text-align:right;">92</span>
<svg style="left:29px;top:210px" width="6" height="6"><path d="M0 0H6L0 6Z" fill="#1e7d45"/></svg>
<div class="b" style="left:29px;top:250px;width:602px;height:1px;background:#ee8038;"></div>
<span class="t" style="left:31px;top:234.5px;font-size:14.67px;color:#000;">1002</span>
<span class="t" style="left:113px;top:234.5px;font-size:14.67px;color:#000;letter-spacing:-0.08px;">Pushmax Chanh leo</span>
<span class="t" style="left:253px;top:234.5px;font-size:14.67px;color:#000;letter-spacing:-0.1px;">Thùng</span>
<span class="t" style="left:288px;top:234.5px;font-size:14.67px;color:#000;width:100px;text-align:right;">190</span>
<span class="t" style="left:369px;top:234.5px;font-size:14.67px;color:#000;width:100px;text-align:right;">16.790</span>
<span class="t" style="left:450px;top:234.5px;font-size:14.67px;color:#000;width:100px;text-align:right;">15.804</span>
<span class="t" style="left:525.5px;top:234.5px;font-size:14.67px;color:#000;width:100px;text-align:right;">1.176</span>
<svg style="left:29px;top:229px" width="6" height="6"><path d="M0 0H6L0 6Z" fill="#1e7d45"/></svg>
<div class="b" style="left:29px;top:288px;width:602px;height:1px;background:#ee8038;"></div>
<span class="t" style="left:31px;top:272.5px;font-size:14.67px;color:#000;">2012</span>
<span class="t" style="left:113px;top:272.5px;font-size:14.67px;color:#000;letter-spacing:-0.08px;">lon cao</span>
<span class="t" style="left:113px;top:253.5px;font-size:14.67px;color:#000;letter-spacing:-0.08px;">Pushmax Cam ép</span>
<span class="t" style="left:253px;top:272.5px;font-size:14.67px;color:#000;letter-spacing:-0.1px;">Thùng</span>
<span class="t" style="left:288px;top:272.5px;font-size:14.67px;color:#000;width:100px;text-align:right;">148</span>
<span class="t" style="left:369px;top:272.5px;font-size:14.67px;color:#000;width:100px;text-align:right;">480</span>
<span class="t" style="left:450px;top:272.5px;font-size:14.67px;color:#000;width:100px;text-align:right;">398</span>
<span class="t" style="left:525.5px;top:272.5px;font-size:14.67px;color:#000;width:100px;text-align:right;">230</span>
<svg style="left:29px;top:251px" width="6" height="6"><path d="M0 0H6L0 6Z" fill="#1e7d45"/></svg>
<div class="b" style="left:29px;top:326px;width:602px;height:1px;background:#ee8038;"></div>
<span class="t" style="left:31px;top:310.5px;font-size:14.67px;color:#000;">9003</span>
<span class="t" style="left:113px;top:310.5px;font-size:14.67px;color:#000;letter-spacing:-0.08px;">Pushmax</span>
<span class="t" style="left:113px;top:291.5px;font-size:14.67px;color:#000;letter-spacing:-0.08px;">Nước tinh khiết</span>
<span class="t" style="left:253px;top:310.5px;font-size:14.67px;color:#000;letter-spacing:-0.1px;">Két</span>
<span class="t" style="left:288px;top:310.5px;font-size:14.67px;color:#000;width:100px;text-align:right;">86</span>
<span class="t" style="left:369px;top:310.5px;font-size:14.67px;color:#000;width:100px;text-align:right;">395</span>
<span class="t" style="left:450px;top:310.5px;font-size:14.67px;color:#000;width:100px;text-align:right;">452</span>
<span class="t" style="left:525.5px;top:310.5px;font-size:14.67px;color:#000;width:100px;text-align:right;">29</span>
<svg style="left:29px;top:289px" width="6" height="6"><path d="M0 0H6L0 6Z" fill="#1e7d45"/></svg>
<div class="b" style="left:29px;top:347px;width:602px;height:1px;background:#ee8038;"></div>
<span class="t" style="left:31px;top:331.5px;font-size:14.67px;color:#000;">9004</span>
<span class="t" style="left:113px;top:331.5px;font-size:14.67px;color:#000;letter-spacing:-0.08px;">Nước ép quả Lựu</span>
<span class="t" style="left:253px;top:331.5px;font-size:14.67px;color:#000;letter-spacing:-0.1px;">Chai</span>
<span class="t" style="left:288px;top:331.5px;font-size:14.67px;color:#000;width:100px;text-align:right;">220</span>
<span class="t" style="left:369px;top:331.5px;font-size:14.67px;color:#000;width:100px;text-align:right;">520</span>
<span class="t" style="left:450px;top:331.5px;font-size:14.67px;color:#000;width:100px;text-align:right;">430</span>
<span class="t" style="left:525.5px;top:331.5px;font-size:14.67px;color:#000;width:100px;text-align:right;">310</span>
<svg style="left:29px;top:327px" width="6" height="6"><path d="M0 0H6L0 6Z" fill="#1e7d45"/></svg>
<span class="t" style="left:889px;top:60.5px;font-size:14.67px;color:#000;width:100px;text-align:right;">8682</span>
<div class="b" style="left:558px;top:17px;width:74px;height:2px;background:#217346;"></div>
<div class="b" style="left:27px;top:39px;width:2px;height:38px;background:#217346;"></div>
<div class="b" style="left:556px;top:37px;width:77px;height:41px;border:2px solid #217346;"></div>
<div class="b" style="left:1344px;top:18px;width:1px;height:443px;background:#9b9b9b;"></div>
<div class="b" style="left:0px;top:460px;width:1345px;height:1px;background:#9b9b9b;"></div>
</div>
<div class="b" style="left:1345px;top:218px;width:21px;height:461px;background:#e6e6e6;"></div>
<div class="b" style="left:1348px;top:220px;width:15px;height:459px;background:#dadada;"></div>
<div class="b" style="left:1348px;top:220px;width:15px;height:15px;background:#fff;border:1px solid #ababab;"></div>
<div class="b" style="left:1348px;top:236px;width:15px;height:385px;background:#fff;border:1px solid #ababab;"></div>
<div class="b" style="left:1348px;top:664px;width:15px;height:15px;background:#fff;border:1px solid #ababab;"></div>
<svg style="left:1352px;top:225.500px" width="7" height="4"><path d="M0 4L3.500 0L7 4Z" fill="#777"/></svg>
<svg style="left:1352px;top:669.500px" width="7" height="4"><path d="M0 0L3.500 4L7 0Z" fill="#777"/></svg>
<div class="b" style="left:0px;top:679px;width:1366px;height:28px;background:#e6e6e6;"></div>
<span class="t" style="left:114px;top:686px;font-size:12px;color:#444;letter-spacing:0.203px;">Bán hàng</span>
<span class="t" style="left:245px;top:686px;font-size:12px;color:#444;letter-spacing:0.514px;">Doanh thu</span>
<span class="t" style="left:333px;top:686px;font-size:12px;color:#444;letter-spacing:0.110px;">Thi</span>
<span class="t" style="left:376px;top:686px;font-size:12px;color:#444;letter-spacing:0.221px;">NKC</span>
<span class="t" style="left:427px;top:686px;font-size:12px;color:#444;letter-spacing:-0.005px;">Sheet1</span>
<span class="t" style="left:492px;top:686px;font-size:12px;color:#444;letter-spacing:-0.005px;">Sheet2</span>
<span class="t" style="left:557px;top:686px;font-size:12px;color:#444;letter-spacing:-0.005px;">Sheet4</span>
<div class="b" style="left:100px;top:682px;width:1px;height:20px;background:#ababab;"></div>
<div class="b" style="left:232px;top:682px;width:1px;height:20px;background:#ababab;"></div>
<div class="b" style="left:320px;top:682px;width:1px;height:20px;background:#ababab;"></div>
<div class="b" style="left:364px;top:682px;width:1px;height:20px;background:#ababab;"></div>
<div class="b" style="left:414px;top:682px;width:1px;height:20px;background:#ababab;"></div>
<div class="b" style="left:479px;top:682px;width:1px;height:20px;background:#ababab;"></div>
<div class="b" style="left:544px;top:682px;width:1px;height:20px;background:#ababab;"></div>
<div class="b" style="left:609px;top:682px;width:1px;height:20px;background:#ababab;"></div>
<div class="b" style="left:182px;top:678px;width:50px;height:25px;background:#fff;border-bottom:2px solid #217346;border-left:1px solid #ababab;border-right:1px solid #ababab;"></div>
<span class="t" style="left:195px;top:686px;font-size:12px;color:#217346;letter-spacing:-0.108px;font-weight:bold;">Kho</span>
<svg style="left:26px;top:687px" width="6" height="9"><path d="M5 0L0 4.5L5 9Z" fill="#c0c0c0"/></svg>
<svg style="left:55px;top:687px" width="6" height="9"><path d="M0 0L5 4.5L0 9Z" fill="#c0c0c0"/></svg>
<div class="b" style="left:836px;top:685px;width:509px;height:15px;background:#dadada;"></div>
<div class="b" style="left:836px;top:685px;width:15px;height:15px;background:#fff;border:1px solid #ababab;"></div>
<div class="b" style="left:1330px;top:685px;width:15px;height:15px;background:#fff;border:1px solid #ababab;"></div>
<div class="b" style="left:850px;top:685px;width:450px;height:15px;background:#fff;border:1px solid #ababab;"></div>
<svg style="left:841px;top:688px" width="5" height="9"><path d="M5 0L0 4.5L5 9Z" fill="#777"/></svg>
<svg style="left:1336px;top:688px" width="5" height="9"><path d="M0 0L5 4.5L0 9Z" fill="#777"/></svg>
<div class="b" style="left:0px;top:706px;width:1366px;height:1px;background:#c8c8c8;"></div>
<div class="b" style="left:0px;top:707px;width:1366px;height:21px;background:#f1f1f1;"></div>
<span class="t" style="left:7.5px;top:712px;font-size:12px;color:#444;letter-spacing:-0.937px;">Ready</span>
<svg style="left:58px;top:710px" width="14" height="14" viewBox="0 0 14 14"><rect x="2.100" y="4.600" width="10.800" height="8" fill="#fff" stroke="#7a7a7a" stroke-width="1.200"/><rect x="7" y="1.500" width="6.500" height="2.600" fill="#8a8a8a"/><path d="M4 7.400h8M4 10h8" stroke="#8a8a8a" stroke-width=".9" stroke-dasharray="2 1"/><circle cx="3.300" cy="3.300" r="3.100" fill="#7a7a7a"/></svg>
<div class="b" style="left:1071px;top:707px;width:38px;height:21px;background:#c8c8c8;"></div>
<svg style="left:1083px;top:710px" width="13" height="13" viewBox="0 0 13 13"><path d="M0.750 0.750h11.500v11.500h-11.500zM0.750 4.500h11.500M0.750 8.500h11.500M4.500 0.750v11.500M8.500 0.750v11.500" fill="none" stroke="#6a6a6a" stroke-width="1.500"/></svg>
<svg style="left:1121px;top:710px" width="14" height="13" viewBox="0 0 14 13"><path d="M0.750 0.750h12.500v11.500h-12.500z" fill="#fff" stroke="#6a6a6a" stroke-width="1.300"/><path d="M3.500 2.500h7v8h-7z" fill="none" stroke="#6a6a6a" stroke-width="1.100"/><path d="M5 4.600h4M5 6.500h4M5 8.400h4" stroke="#6a6a6a" stroke-width="1"/></svg>
<svg style="left:1159px;top:710px" width="14" height="13" viewBox="0 0 14 13"><path d="M0.750 0.750h12.500v11.500h-12.500z" fill="#fff" stroke="#6a6a6a" stroke-width="1.300"/><path d="M4.500 0.750v6.500M0.750 7.500h7.500v-6.750" fill="none" stroke="#6a6a6a" stroke-width="1.300"/></svg>
<div class="b" style="left:1190px;top:716px;width:6px;height:2px;background:#5a5a5a;"></div>
<div class="b" style="left:1200px;top:716px;width:100px;height:1px;background:#a0a0a0;"></div>
<div class="b" style="left:1248px;top:711px;width:4px;height:11px;background:#5a5a5a;"></div>
<div class="b" style="left:1304px;top:716px;width:9px;height:2px;background:#5a5a5a;"></div>
<div class="b" style="left:1307.5px;top:712.5px;width:2px;height:9px;background:#5a5a5a;"></div>
<span class="t" style="left:1329px;top:711.5px;font-size:11.5px;color:#444;letter-spacing:-0.721px;">100 %</span>
<div class="b" style="left:0px;top:728px;width:1366px;height:40px;background:linear-gradient(90deg,#14161a 0%,#15171c 30%,#1b1e26 55%,#181a20 80%,#16181d 100%);"></div>
<div class="b" style="left:0px;top:728px;width:48px;height:40px;background:#1c1c1c;"></div>
<div class="b" style="left:48px;top:728px;width:344px;height:40px;background:#f2f2f2;border-top:1px solid #d4d4d4;border-bottom:1px solid #bdbdbd;"></div>
<svg style="left:16px;top:739px" width="16" height="17" viewBox="0 0 17 17" preserveAspectRatio="none"><path d="M0 2.4L7 1.4V8H0zM8 1.250L17 0V8H8zM0 9H7V15.600L0 14.600zM8 9H17V17L8 15.750z" fill="#fff"/></svg>
<svg style="left:60px;top:738px" width="18" height="18" viewBox="0 0 18 18"><circle cx="10.700" cy="7.300" r="5.200" fill="none" stroke="#2b2b2b" stroke-width="1.200"/><path d="M7 11L0.500 17.500" stroke="#2b2b2b" stroke-width="1.200"/></svg>
<span class="t" style="left:88px;top:741px;font-size:15px;color:#2f2f2f;letter-spacing:-0.240px;">Type here to search</span>
<svg style="left:407px;top:739px" width="18" height="16" viewBox="0 0 18 16"><path d="M1 1.500h12M1 14.500h12M2.500 4.500h9v7h-9z" fill="none" stroke="#fff" stroke-width="1.200"/><path d="M15.500 0v3M15.500 12v4" stroke="#fff" stroke-width="1.200"/><rect x="14.300" y="6" width="2.600" height="3.500" fill="#fff"/></svg>
<svg style="left:455px;top:738px" width="23" height="19" viewBox="0 0 23 19"><path d="M0 2a1 1 0 0 1 1-1h7l2 2h12a1 1 0 0 1 1 1v14H0z" fill="#f5b93a"/><path d="M0 5h23v13H0z" fill="#fcd667"/><path d="M5 11h13v7h-3v-4H8v4H5z" fill="#3b8fe0"/></svg>
<svg style="left:505px;top:736px" width="22" height="23" viewBox="0 0 22 23"><path d="M1 10.500C2 4 6.500 0.500 12 0.500c6 0 9.500 4.500 9.500 10v3H8c0 3 2.500 5 6 5 2.500 0 4.500-.6 6.500-1.800v4.500c-2 1-4.500 1.500-7 1.500-6 0-10-3.500-10-9 0-3.500 1.800-6.500 5-8-1.500 1.200-2.300 2.800-2.500 4.300h9.500c0-3-1.500-5-4.500-5-4 0-7.500 2.500-10 5.500z" fill="#0b79d9"/></svg>
<svg style="left:553px;top:737px" width="23" height="22" viewBox="0 0 23 22"><path d="M11 4h12v13H11z" fill="#1272c4"/><path d="M12 6l5.500 4.500L23 6v9H12z" fill="#fff"/><path d="M12 6l5.500 4.500L23 6" fill="none" stroke="#1272c4" stroke-width="1.300"/><path d="M0 2.500L13 0v22L0 19.500z" fill="#0f6cbd"/><ellipse cx="6.500" cy="11" rx="3" ry="3.800" fill="none" stroke="#fff" stroke-width="1.600"/></svg>
<svg style="left:601px;top:738px" width="24" height="20" viewBox="0 0 24 20"><rect x="1" y="1" width="10" height="9" rx="1.500" fill="#e8e8e8" stroke="#bdbdbd"/><rect x="13" y="1" width="10" height="9" rx="1.500" fill="#e8e8e8" stroke="#bdbdbd"/><rect x="7" y="10" width="10" height="9" rx="1.500" fill="#e8e8e8" stroke="#bdbdbd"/></svg>
<span class="t" style="left:605px;top:738px;font-size:8px;color:#e8212b;font-weight:bold;">u</span>
<span class="t" style="left:618px;top:738px;font-size:8px;color:#e8212b;font-weight:bold;">i</span>
<span class="t" style="left:610px;top:747px;font-size:8px;color:#e8212b;font-weight:bold;">n</span>
<div class="b" style="left:651px;top:736px;width:24px;height:24px;background:#050505;border-radius:2px;"></div>
<svg style="left:654px;top:738px" width="19" height="20" viewBox="0 0 19 20"><path d="M1 7.500C4 5.500 7 4 10.500 2.500C9.500 3.500 9 4.200 8.500 5C11.500 4.300 14.500 4.500 17.500 5.500C15 5.800 13 6.500 11.500 7.500" fill="none" stroke="#e8212b" stroke-width="1.500" stroke-linejoin="round"/><path d="M15.500 8.500H8C5.500 8.500 3.800 10.300 3.800 12.500C3.800 15 5.700 17 8.500 17C11 17 12.500 15.500 13 13H8.500C7.800 13 7.500 12.500 7.800 12" fill="none" stroke="#e8212b" stroke-width="1.800"/></svg>
<svg style="left:700px;top:736px" width="24" height="24" viewBox="0 0 24 24"><path d="M7.670 14.500L2.770 6.010A11 11 0 0 1 21.800 7L12 7L12 12Z" fill="#e04a3a"/><path d="M12 7L21.800 7A11 11 0 0 1 11.430 22.990L16.330 14.500L12 12Z" fill="#fbc733"/><path d="M16.330 14.500L11.430 22.990A11 11 0 0 1 2.770 6.010L7.670 14.500L12 12Z" fill="#22a25a"/><circle cx="12" cy="12" r="5.100" fill="#f4f4f4"/><circle cx="12" cy="12" r="4" fill="#4285f4"/></svg>
<svg style="left:749px;top:737px" width="25" height="23" viewBox="0 0 25 23"><path d="M1.500 12c1.500 4.500 8 5 14 2.500l-1 2.300c-5 2.200-11 1.700-13-2z" fill="#9a9a9a"/><ellipse cx="12" cy="8.800" rx="11" ry="6.300" transform="rotate(-20 12 8.800)" fill="#f6f6f6" stroke="#d8262c" stroke-width="1.300"/><path d="M6.500 8.500L14.500 15.500M12.800 3.500L15.800 14.500" stroke="#8a8a8a" stroke-width="1.300"/><ellipse cx="16.300" cy="18.300" rx="2" ry="3.300" transform="rotate(18 16.300 18.300)" fill="none" stroke="#1e8ad6" stroke-width="1.500"/><ellipse cx="20.500" cy="15.300" rx="2" ry="3.300" transform="rotate(62 20.500 15.300)" fill="none" stroke="#1e8ad6" stroke-width="1.500"/></svg>
<div class="b" style="left:786px;top:728px;width:48px;height:40px;background:#4a4b4f;"></div>
<svg style="left:799px;top:736px" width="22" height="23" viewBox="0 0 23 23" preserveAspectRatio="none"><path d="M12 3.500h10.500v16H12z" fill="#fff" stroke="#1e7145"/><path d="M13.500 5.500h3.500v2h-3.500zM18 5.500h3.500v2H18zM13.500 8.500h3.500v2h-3.500zM18 8.500h3.500v2H18zM13.500 11.500h3.500v2h-3.500zM18 11.500h3.500v2H18zM13.500 14.500h3.500v2h-3.500zM18 14.500h3.500v2H18z" fill="#1e7145"/><path d="M0 2.500L13.500 0v23L0 20.500z" fill="#1e7145"/><path d="M3.500 7l5.500 9M9 7l-5.500 9" stroke="#fff" stroke-width="1.900"/></svg>
<svg style="left:847px;top:736px" width="25" height="24" viewBox="0 0 25 24"><path d="M1 13C1 8 6 4.500 12.500 4.500c5.500 0 9.500 2.800 9.500 6.500 0 2.200-1.500 3.300-3.200 3.300-2.200 0-3.300.8-3.300 2.200 0 1.300 1 1.800 1 3 0 1.300-1.600 2.300-4.300 2.300C5.500 21.800 1 18 1 13z" fill="#b3d3ee" stroke="#8ab4d8" stroke-width=".8"/><circle cx="5.500" cy="12.500" r="1.900" fill="#d9382f"/><circle cx="9.300" cy="8.800" r="1.800" fill="#55b548"/><circle cx="14.200" cy="7.300" r="1.800" fill="#f4ab32"/><circle cx="11" cy="14.500" r="1.500" fill="#15171c"/><path d="M20.800 3.800l1.700 1L12.300 23.600l-1.500.4.200-1.700z" fill="#e8902e"/><path d="M20.200 0.800l3.600.8-1.200 3.600-2.600-1.400z" fill="#f0d4a0"/></svg>
<div class="b" style="left:447px;top:766px;width:40px;height:2px;background:#8fc650;"></div>
<div class="b" style="left:692px;top:766px;width:40px;height:2px;background:#8fc650;"></div>
<div class="b" style="left:741px;top:766px;width:40px;height:2px;background:#8fc650;"></div>
<div class="b" style="left:786px;top:766px;width:48px;height:2px;background:#8fc650;"></div>
<div class="b" style="left:839px;top:766px;width:40px;height:2px;background:#8fc650;"></div>
<div class="b" style="left:723px;top:766px;width:9px;height:2px;background:#76a544;"></div>
<svg style="left:1117px;top:744px" width="13" height="8" viewBox="0 0 13 8"><path d="M0.500 7L6.500 1L12.500 7" fill="none" stroke="#fff" stroke-width="1.300"/></svg>
<svg style="left:1139px;top:742px" width="17" height="11" viewBox="0 0 17 11"><path d="M5.500 2.500h9.500v6.500h-9.500z" fill="none" stroke="#fff" stroke-width="1.200"/><path d="M15.500 4.500v2.500" stroke="#fff" stroke-width="1.400"/><path d="M6.500 3.500h7v4.500h-7z" fill="#fff"/><path d="M1.500 0v2.500M3.500 0v2.500M0.500 2.500h4v2a2 2 0 0 1-4 0zM2.500 6.500v2.500h2" fill="none" stroke="#fff" stroke-width="1"/></svg>
<svg style="left:1165px;top:742px" width="15" height="14" viewBox="0 0 15 14"><path d="M1 13A11.500 11.500 0 0 1 12.500 1.500M4.500 13A8 8 0 0 1 12.500 5M8 13a4.500 4.500 0 0 1 4.500-4.500" fill="none" stroke="#d8d8d8" stroke-width="1.300"/><circle cx="12" cy="12" r="1.700" fill="#fff"/></svg>
<svg style="left:1186px;top:741px" width="16" height="14" viewBox="0 0 16 14"><path d="M0.600 4.500h2.500L7 1v12L3.100 9.500H0.600z" fill="none" stroke="#fff" stroke-width="1.100"/><path d="M10 4.500l5 5M15 4.500l-5 5" stroke="#fff" stroke-width="1.200"/></svg>
<span class="t" style="left:1213.5px;top:742px;font-size:12px;color:#fff;letter-spacing:-1.668px;">ENG</span>
<span class="t" style="left:1257px;top:733px;font-size:12px;color:#fff;letter-spacing:-0.431px;">4:40 CH</span>
<span class="t" style="left:1250px;top:751px;font-size:12px;color:#fff;letter-spacing:-0.216px;">11/02/2020</span>
<svg style="left:1325px;top:739px" width="17" height="17" viewBox="0 0 17 17"><path d="M0.500 0.500h15.500v12H7l-3 3.500v-3.500H0.500z" fill="#fff"/><path d="M3 3.500h10M3 6h10M3 8.500h7" stroke="#15171c" stroke-width="1.100"/><circle cx="13.500" cy="12.500" r="3" fill="#15171c"/><path d="M12.300 13.700a1.700 1.700 0 1 0 1.800-2.600" fill="none" stroke="#fff" stroke-width="1"/></svg>
<div class="b" style="left:1361px;top:728px;width:1px;height:40px;background:#5b5d61;"></div>
<div class="b" style="left:616px;top:133px;width:262px;height:56px;background:#fff;border:1px solid #c6c6c6;"></div>
<div class="b" style="left:620px;top:137px;width:65px;height:24px;background:#fff;border:1px solid #c6c6c6;"></div>
<div class="b" style="left:684px;top:137px;width:46px;height:24px;background:#fff;border:1px solid #c6c6c6;"></div>
<span class="t" style="left:623.5px;top:142px;font-size:12px;color:#444;letter-spacing:-0.201px;">Arial</span>
<span class="t" style="left:687.5px;top:142px;font-size:12px;color:#444;letter-spacing:-0.478px;">11</span>
<svg style="left:674px;top:147px" width="5" height="3" viewBox="0 0 5 3"><path d="M0 0h5L2.500 3z" fill="#666"/></svg>
<svg style="left:720px;top:147px" width="5" height="3" viewBox="0 0 5 3"><path d="M0 0h5L2.500 3z" fill="#666"/></svg>
<span class="t" style="left:736px;top:143px;font-size:14px;color:#555;">A</span>
<svg style="left:744px;top:141.5px" width="5" height="3.5" viewBox="0 0 5 3.5"><path d="M0 3.500h5L2.500 0z" fill="#4279bd"/></svg>
<span class="t" style="left:759px;top:145.5px;font-size:11.5px;color:#555;">A</span>
<svg style="left:766px;top:142px" width="5" height="3.5" viewBox="0 0 5 3.5"><path d="M0 0h5L2.500 3.500z" fill="#4279bd"/></svg>
<svg style="left:777px;top:141px" width="17" height="16" viewBox="0 0 17 16"><path d="M1 1h14v7H1z" fill="#fff" stroke="#4279bd" stroke-width="1.600"/><circle cx="8" cy="4.500" r="2" fill="#4279bd"/><path d="M2.500 2.500h1M12.500 2.500h1" stroke="#4279bd"/><g fill="#f1c27d" stroke="#e8a551" stroke-width=".5"><ellipse cx="12" cy="7" rx="3.500" ry="1.200"/><ellipse cx="12" cy="9" rx="3.500" ry="1.200"/><ellipse cx="12" cy="11" rx="3.500" ry="1.200"/><ellipse cx="7.500" cy="12" rx="3.500" ry="1.200"/><ellipse cx="7.500" cy="14" rx="3.500" ry="1.200"/></g></svg>
<svg style="left:799px;top:147px" width="5" height="3" viewBox="0 0 5 3"><path d="M0 0h5L2.500 3z" fill="#666"/></svg>
<span class="t" style="left:813px;top:142px;font-size:15px;color:#555;letter-spacing:-0.338px;">%</span>
<span class="t" style="left:838px;top:136px;font-size:17px;color:#555;font-weight:bold;font-family:'Liberation Serif',serif;">,</span>
<svg style="left:855px;top:141px" width="16" height="16" viewBox="0 0 16 16"><path d="M0.500 0.500h14.500v14.500h-14.500zM0.500 3.500h14.500M0.500 12h14.500M5.500 0.500v3M10 0.500v3M5.500 12v3M10 12v3" fill="#f7f2f7" stroke="#bdb5bd"/><path d="M2.500 7.800h10.500M2.500 7.800l2-1.800M2.500 7.800l2 1.800M13 7.800l-2-1.800M13 7.800l-2 1.800" fill="none" stroke="#aaa" stroke-width=".9"/></svg>
<span class="t" style="left:626.5px;top:166.5px;font-size:12.5px;color:#444;font-weight:bold;">B</span>
<span class="t" style="left:649.5px;top:165px;font-size:14px;color:#444;"><i style="font-family:'Liberation Serif',serif;font-weight:bold;">I</i></span>
<div class="b" style="left:664px;top:161px;width:22px;height:24px;background:#c6c6c6;"></div>
<svg style="left:668px;top:167px" width="14" height="12" viewBox="0 0 14 12"><path d="M0 1.500h14M2 4.500h10M0 7.500h14M2 10.500h10" stroke="#555" stroke-width="1"/></svg>
<svg style="left:689px;top:164px" width="17" height="18" viewBox="0 0 17 18"><path d="M0 13.500h16v4H0z" fill="#ffff00"/><path d="M3 8l5.500-5.500 5 5L8 13z" fill="#fff" stroke="#555" stroke-width="1"/><path d="M6.500 5V2a1.300 1.300 0 0 1 2.600 0v3" fill="none" stroke="#555" stroke-width=".9"/><path d="M13.500 6.500c1.800 1.500 2.500 3.500 1.500 6-1-1.200-1.500-3-1.500-6z" fill="#4279bd"/></svg>
<svg style="left:711px;top:172px" width="5" height="3" viewBox="0 0 5 3"><path d="M0 0h5L2.500 3z" fill="#666"/></svg>
<span class="t" style="left:726px;top:165px;font-size:14px;color:#555;">A</span>
<div class="b" style="left:723px;top:177px;width:16px;height:4px;background:#ff0000;"></div>
<svg style="left:745px;top:172px" width="5" height="3" viewBox="0 0 5 3"><path d="M0 0h5L2.500 3z" fill="#666"/></svg>
<svg style="left:758px;top:166px" width="14" height="14" viewBox="0 0 14 14"><g shape-rendering="crispEdges"><path d="M0 0.500h13M0 6.500h13M0.500 0v11M6.500 0v11M12.500 0v11" fill="none" stroke="#777" stroke-dasharray="1 1"/><path d="M0 12.500h13" stroke="#555" stroke-width="1"/></g></svg>
<svg style="left:779px;top:172px" width="5" height="3" viewBox="0 0 5 3"><path d="M0 0h5L2.500 3z" fill="#666"/></svg>
<svg style="left:791px;top:166px" width="7" height="6" viewBox="0 0 7 6"><path d="M7 3H1M3.500 0.500L0.800 3l2.700 2.500" fill="none" stroke="#4279bd" stroke-width="1.200"/></svg>
<span class="t" style="left:797.5px;top:164.5px;font-size:8.5px;color:#333;">.0</span>
<span class="t" style="left:793.5px;top:171.5px;font-size:8.5px;color:#333;">.00</span>
<span class="t" style="left:815.5px;top:164.5px;font-size:8.5px;color:#333;">.00</span>
<svg style="left:813px;top:173px" width="7" height="6" viewBox="0 0 7 6"><path d="M0 3h6M3.500 0.500L6.200 3 3.500 5.500" fill="none" stroke="#4279bd" stroke-width="1.200"/></svg>
<span class="t" style="left:820px;top:171.5px;font-size:8.5px;color:#333;">.0</span>
<svg style="left:835px;top:166px" width="17" height="15" viewBox="0 0 17 15"><path d="M0.500 6.500l6-2 5 5.500-3.500 4z" fill="#e8b86a"/><path d="M6.500 3.500l3-2.500 5 4.500-3 3z" fill="#6a6a6a" transform="translate(0,1.500)"/><path d="M12.500 2.500l2-2 1.800 1.800-2 2z" fill="#555"/></svg>
<div class="b" style="left:616px;top:204px;width:205px;height:524px;background:#fff;border:1px solid #c6c6c6;"></div>
<span class="t" style="left:649.4px;top:212px;font-size:12px;color:#444;letter-spacing:-0.024px;">Cu<u>t</u></span>
<span class="t" style="left:649.4px;top:236px;font-size:12px;color:#444;letter-spacing:-0.153px;"><u>C</u>opy</span>
<div class="b" style="left:642px;top:254px;width:177px;height:22px;background:#ebebeb;"></div>
<span class="t" style="left:651.4px;top:259px;font-size:12px;color:#555;letter-spacing:-0.434px;font-weight:bold;">Paste Options:</span>
<span class="t" style="left:649.4px;top:312px;font-size:12px;color:#444;letter-spacing:-0.473px;">Paste <u>S</u>pecial...</span>
<span class="t" style="left:649.4px;top:338px;font-size:12px;color:#444;letter-spacing:-0.117px;">Smart <u>L</u>ookup</span>
<span class="t" style="left:649.4px;top:364px;font-size:12px;color:#a8a8a8;letter-spacing:-0.574px;"><u>R</u>efresh</span>
<span class="t" style="left:649.4px;top:390px;font-size:12px;color:#444;letter-spacing:-0.235px;"><u>I</u>nsert</span>
<span class="t" style="left:649.4px;top:414px;font-size:12px;color:#444;letter-spacing:-0.348px;"><u>D</u>elete</span>
<span class="t" style="left:649.4px;top:438px;font-size:12px;color:#444;letter-spacing:-0.492px;">Se<u>l</u>ect</span>
<span class="t" style="left:649.4px;top:462px;font-size:12px;color:#444;letter-spacing:-0.188px;">Clear Co<u>n</u>tents</span>
<span class="t" style="left:649.4px;top:488px;font-size:12px;color:#444;letter-spacing:-0.123px;"><u>Q</u>uick Analysis</span>
<span class="t" style="left:649.4px;top:512px;font-size:12px;color:#444;letter-spacing:-0.427px;">S<u>o</u>rt</span>
<span class="t" style="left:649.4px;top:536px;font-size:12px;color:#444;letter-spacing:-0.211px;">Filt<u>e</u>r</span>
<span class="t" style="left:649.4px;top:560px;font-size:12px;color:#444;letter-spacing:-0.217px;">Ta<u>b</u>le</span>
<span class="t" style="left:649.4px;top:585px;font-size:12px;color:#444;letter-spacing:0.040px;"><u>E</u>dit Comment</span>
<span class="t" style="left:649.4px;top:634px;font-size:12px;color:#444;letter-spacing:0.068px;">S<u>h</u>ow/Hide Comments</span>
<span class="t" style="left:649.4px;top:660px;font-size:12px;color:#444;letter-spacing:-0.267px;"><u>F</u>ormat Cells...</span>
<span class="t" style="left:649.4px;top:684px;font-size:12px;color:#444;letter-spacing:-0.060px;">Pic<u>k</u> From Drop-down List...</span>
<span class="t" style="left:649.4px;top:708px;font-size:12px;color:#444;letter-spacing:-0.051px;">Hyperl<u>i</u>nk...</span>
<div class="b" style="left:650px;top:330px;width:169px;height:1px;background:#e1e1e1;"></div>
<div class="b" style="left:650px;top:356px;width:169px;height:1px;background:#e1e1e1;"></div>
<div class="b" style="left:650px;top:382px;width:169px;height:1px;background:#e1e1e1;"></div>
<div class="b" style="left:650px;top:480px;width:169px;height:1px;background:#e1e1e1;"></div>
<div class="b" style="left:650px;top:578px;width:169px;height:1px;background:#e1e1e1;"></div>
<div class="b" style="left:650px;top:652px;width:169px;height:1px;background:#e1e1e1;"></div>
<svg style="left:806px;top:391px" width="4.5" height="8" viewBox="0 0 4.5 8"><path d="M0 0L4.500 4L0 8z" fill="#666"/></svg>
<svg style="left:806px;top:416px" width="4.5" height="8" viewBox="0 0 4.5 8"><path d="M0 0L4.500 4L0 8z" fill="#666"/></svg>
<svg style="left:806px;top:439px" width="4.5" height="8" viewBox="0 0 4.5 8"><path d="M0 0L4.500 4L0 8z" fill="#666"/></svg>
<svg style="left:806px;top:513px" width="4.5" height="8" viewBox="0 0 4.5 8"><path d="M0 0L4.500 4L0 8z" fill="#666"/></svg>
<svg style="left:806px;top:537px" width="4.5" height="8" viewBox="0 0 4.5 8"><path d="M0 0L4.500 4L0 8z" fill="#666"/></svg>
<svg style="left:806px;top:561px" width="4.5" height="8" viewBox="0 0 4.5 8"><path d="M0 0L4.500 4L0 8z" fill="#666"/></svg>
<svg style="left:622px;top:210px" width="16" height="16" viewBox="0 0 16 16"><path d="M3.200 0.300L10.400 11M12.300 0.300L5.100 11" stroke="#5a5a5a" stroke-width="1.900"/><circle cx="3.600" cy="12.300" r="2.300" fill="#fff" stroke="#4279bd" stroke-width="1.300"/><circle cx="11.900" cy="12.300" r="2.300" fill="#fff" stroke="#4279bd" stroke-width="1.300"/></svg>
<svg style="left:622px;top:235px" width="16" height="15" viewBox="0 0 16 15"><path d="M6.500 10.500H0.500V0.500H5.500L7.500 2.500V4.500" fill="#fff" stroke="#666"/><path d="M2 3.500h3M2 5.500h3.500M2 7.500h3.500" stroke="#4279bd"/><path d="M6.500 4.500h5l3 3v6h-8z" fill="#fff" stroke="#666"/><path d="M11.500 4.500v3h3" fill="none" stroke="#666"/><path d="M8.500 8.500h2.500M8.500 10.500h4M8.500 12h4" stroke="#4279bd"/></svg>
<svg style="left:622px;top:256px" width="17" height="17" viewBox="0 0 17 17"><path d="M1 3.500h12.500v12.500H1z" fill="#e9b96c"/><path d="M4.800 4.800V2.800h1.700V1.200h2.500v1.600h1.700v2z" fill="#fff" stroke="#666" stroke-width=".9"/><path d="M8.500 7.500h4.500l3 3v6h-7.500z" fill="#fff" stroke="#555"/><path d="M13 7.500v3h3" fill="none" stroke="#555"/></svg>
<svg style="left:648px;top:280px" width="22" height="23" viewBox="0 0 22 23"><path d="M0.500 4a1 1 0 0 1 1-1h15a1 1 0 0 1 1 1v17.500a1 1 0 0 1-1 1h-15a1 1 0 0 1-1-1z" fill="#e9b96c"/><path d="M2.800 5.500h12.400v14.500H2.800z" fill="#fff"/><path d="M4.500 5.500V3h2.500V1.500a2 1.500 0 0 1 4 0V3h2.500v2.500z" fill="#6e6e6e"/><path d="M4.500 9.800h8" stroke="#e2483a" stroke-width="1.600" stroke-dasharray="1.300 .700"/><path d="M4.500 13h8M4.500 15.500h5" stroke="#4279bd" stroke-width="1.100"/><path d="M20.800 5.500L13.500 15l1.800 1.500L21.500 7z" fill="#6a6a6a"/><path d="M13.300 15.200c-2.500.3-4.300 2.300-5.800 5.300 3.500.5 6.800-.8 7.700-3.800z" fill="#4279bd"/></svg>
<svg style="left:678px;top:280px" width="18" height="23" viewBox="0 0 18 23"><path d="M0.500 4a1 1 0 0 1 1-1h15a1 1 0 0 1 1 1v17.500a1 1 0 0 1-1 1h-15a1 1 0 0 1-1-1z" fill="#e9b96c"/><path d="M2.800 5.500h12.400v14.500H2.800z" fill="#fff"/><path d="M4.500 5.500V3h2.500V1.500a2 1.500 0 0 1 4 0V3h2.500v2.500z" fill="#6e6e6e"/><path d="M4.800 8.500h8.400M4.800 11.300h8.400M4.800 14.100h8.400M4.800 16.900h8.400" stroke="#4279bd" stroke-width="1.200"/></svg>
<svg style="left:622px;top:336px" width="16" height="16" viewBox="0 0 16 16"><path d="M6 10.500L1.200 15" stroke="#4279bd" stroke-width="2.700" stroke-linecap="round"/><circle cx="9.700" cy="6.300" r="5.200" fill="#fff" stroke="#4279bd" stroke-width="1.800"/><rect x="8.800" y="5.500" width="1.900" height="4" fill="#555"/><circle cx="9.750" cy="3.600" r="1.100" fill="#555"/></svg>
<svg style="left:623px;top:362px" width="16" height="16" viewBox="0 0 16 16"><path d="M3 13.500H0.500V0.500h5.500l3 3v3" fill="none" stroke="#c2c2c2"/><path d="M6 0.500v3h3" fill="none" stroke="#c2c2c2"/><path d="M5.500 10a4 4 0 0 1 7.500-1.500M13.500 11.500a4 4 0 0 1-7.500 1.500" fill="none" stroke="#bdbdbd" stroke-width="1.300"/><path d="M13.500 5.500v3.500h-3.500M5.500 15.500v-3.500h3.500" fill="none" stroke="#bdbdbd" stroke-width="1.100"/></svg>
<svg style="left:622px;top:486px" width="16" height="15" viewBox="0 0 16 15"><path d="M3.500 2.500h11v12h-13V9" fill="#fff" stroke="#666"/><path d="M3.500 1.500h11v2.500h-11z" fill="#666"/><path d="M6.500 6.500h4" stroke="#d9502f" stroke-width="1.400"/><path d="M6.500 9h6" stroke="#4279bd" stroke-width="1.400"/><path d="M5.500 11.500h5" stroke="#3a9a5a" stroke-width="1.400"/><path d="M4 0L0.500 6h2.500L1.500 10.500 6 4.500H3.500L5.500 0z" fill="#f1c27d"/></svg>
<svg style="left:622px;top:583px" width="16" height="16" viewBox="0 0 16 16"><path d="M7 2.500h7.500v9h-6l-3 3v-3h-3.500V8" fill="#fff" stroke="#777"/><path d="M1 10.500L9 1.500l2 1.800L3 12l-2.500.5z" fill="#4279bd"/></svg>
<div class="b" style="left:618px;top:604px;width:201px;height:24px;background:#c6c6c6;"></div>
<span class="t" style="left:649.4px;top:610px;font-size:12px;color:#262626;letter-spacing:-0.074px;">Delete Co<u>m</u>ment</span>
<svg style="left:621px;top:607px" width="17" height="16" viewBox="0 0 17 16"><path d="M4 2.500h10a1.500 1.500 0 0 1 1.500 1.500v6a1.500 1.500 0 0 1-1.500 1.500H9L5.500 15l-.500-3.500H4a1.500 1.500 0 0 1-1.500-1.500v-6A1.500 1.500 0 0 1 4 2.500z" fill="#fff" stroke="#777"/><path d="M1 1.200l7.600 7M8.800 1L1.200 8.400" stroke="#d9502f" stroke-width="1.900" stroke-linecap="round"/></svg>
<svg style="left:623px;top:658px" width="15" height="16" viewBox="0 0 15 16"><path d="M0.500 0.500h13.500v15h-13.500z" fill="#fff" stroke="#666"/><path d="M0 0h14.500v3H0z" fill="#4279bd"/><circle cx="4" cy="7" r="1.300" fill="none" stroke="#555"/><circle cx="4" cy="11.500" r="1.300" fill="none" stroke="#555"/><path d="M7 7h5M7 11.500h5" stroke="#555"/></svg>
<svg style="left:622px;top:706px" width="17" height="17" viewBox="0 0 17 17"><path d="M1 8.500A6.500 6.500 0 0 1 14 8.500" fill="#fff" stroke="#777"/><path d="M7.500 2c-3 2-3 4.500-3 6.500M7.500 2c3 2 3 4.500 3 6.500M7.500 2v6.500M1.500 5.500h12" fill="none" stroke="#777" stroke-width=".9"/><rect x="1" y="10" width="8.500" height="5.500" rx="2.750" fill="none" stroke="#4279bd" stroke-width="1.700"/><rect x="7.500" y="10" width="8.500" height="5.500" rx="2.750" fill="none" stroke="#4279bd" stroke-width="1.700"/></svg>
<div class="b" style="left:605px;top:593px;width:228px;height:46px;border:5px solid #ec1c24;"></div>
</body></html>
